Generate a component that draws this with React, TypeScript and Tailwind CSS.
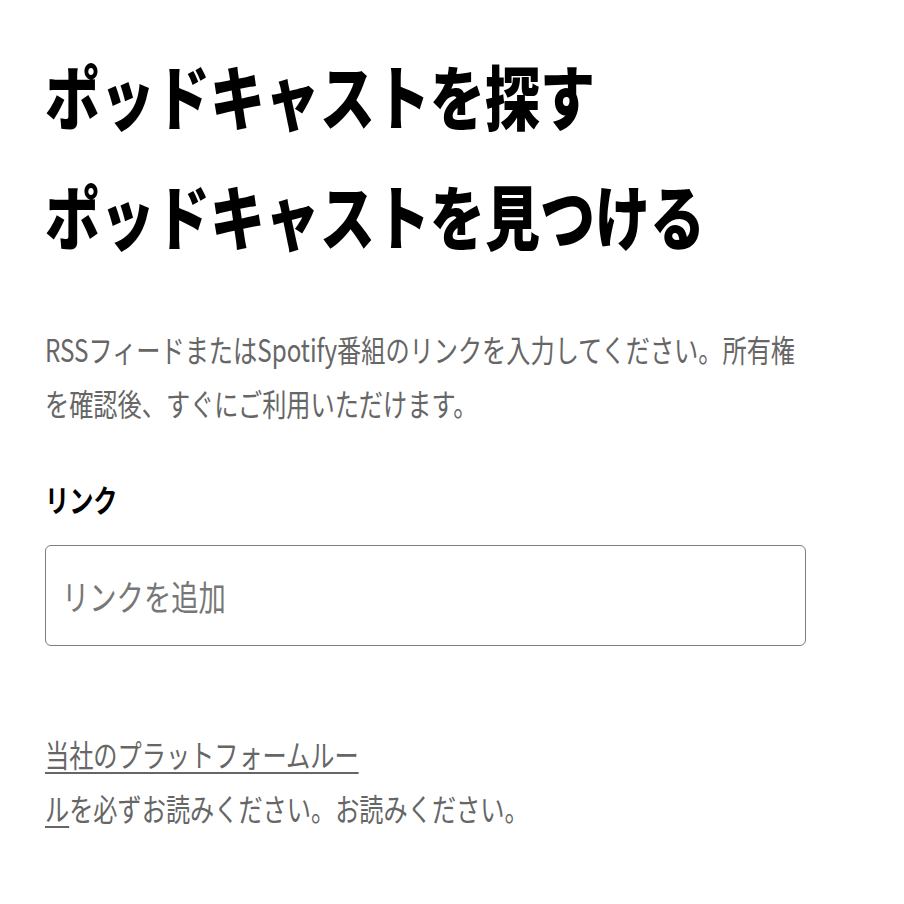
import React from "react";

const font = { fontFamily: '"Noto Sans CJK JP", "Noto Sans", sans-serif' };

function Line({ className, children }: { className: string; children: React.ReactNode }) {
  return <div className={"origin-left scale-x-[0.78] whitespace-nowrap " + className}>{children}</div>;
}

export default function App() {
  return (
    <div className="min-h-[904px] w-[904px] bg-white pl-[45px] pt-[34px]" style={font}>
      <h1 className="font-black text-black">
        <Line className="text-[70.5px] leading-[120px]">ポッドキャストを探す</Line>
        <Line className="text-[70.5px] leading-[120px]">ポッドキャストを見つける</Line>
      </h1>
      <div className="mt-[48px] text-[#666666]">
        <Line className="text-[31px] leading-[54px]">RSSフィードまたはSpotify番組のリンクを入力してください。所有権</Line>
        <Line className="text-[31px] leading-[54px]">を確認後、すぐにご利用いただけます。</Line>
      </div>
      <label className="mt-[42px] block font-bold text-black">
        <Line className="text-[31px] leading-[54px]">リンク</Line>
      </label>
      <div className="mt-[19px] flex h-[101px] w-[761px] items-center rounded-[6px] border border-[#7d7d7d] pl-[16px]">
        <Line className="text-[35px] leading-[50px] text-[#777777]">リンクを追加</Line>
      </div>
      <div className="mt-[81px] text-[#666666]">
        <Line className="text-[31px] leading-[54px]">
          <a className="underline decoration-2 underline-offset-[5px]">当社のプラットフォームルー</a>
        </Line>
        <Line className="text-[31px] leading-[54px]">
          <a className="underline decoration-2 underline-offset-[5px]">ル</a>を必ずお読みください。お読みください。
        </Line>
      </div>
    </div>
  );
}
